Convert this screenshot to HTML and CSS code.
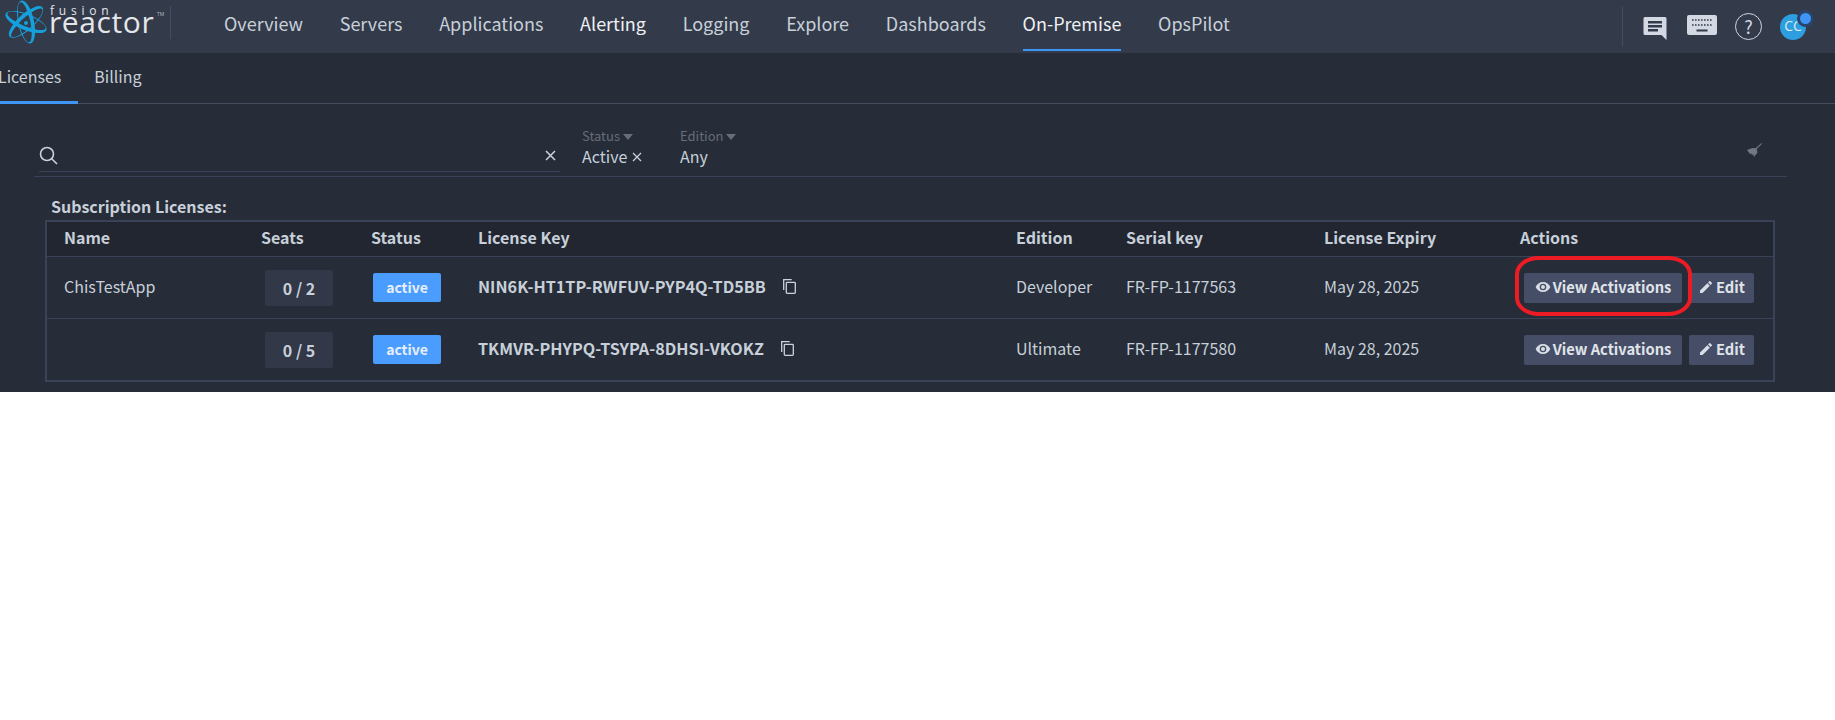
FILE: index.html
```html
<!DOCTYPE html>
<html lang="en">
<head>
  <meta charset="UTF-8">
  <meta name="viewport" content="width=device-width, initial-scale=1.0">
  <title>FusionReactor - Licenses</title>
  <link rel="stylesheet" href="styles.css">
</head>
<body>

<div class="page">
  <!-- top navigation -->
  <header class="topbar">
    <a class="logo">
      <svg width="170" height="53" viewBox="0 0 170 53">
        <defs>
          <path id="orbit" fill="#159fdb" fill-rule="evenodd" d="M-22 0a22 8 0 1 0 44 0a22 8 0 1 0-44 0zM-20.500 -1.300a20.500 5.600 0 1 0 41 0a20.500 5.600 0 1 0-41 0z"/>
        </defs>
        <use href="#orbit" transform="translate(26 22) rotate(-102)"/>
        <use href="#orbit" transform="translate(26 22) rotate(22)"/>
        <use href="#orbit" transform="translate(26 22) rotate(-42) scale(1 -1)"/>
        <circle cx="26" cy="23" r="2" fill="#159fdb"/>
        <text class="logo-small" x="50" y="15">fusion</text>
        <text class="logo-big" x="49" y="33">reactor</text>
        <text class="logo-tm" x="157" y="16">TM</text>
      </svg>
    </a>
    <span class="logo-sep"></span>
    <nav class="mainnav">
      <a>Overview</a>
      <a>Servers</a>
      <a>Applications</a>
      <a class="bright">Alerting</a>
      <a>Logging</a>
      <a>Explore</a>
      <a>Dashboards</a>
      <a class="bright current">On-Premise</a>
      <a>OpsPilot</a>
    </nav>
    <div class="topicons">
      <svg class="ic-chat" width="24" height="23" viewBox="0 0 24 23">
        <path fill="#d3d8e3" d="M2 0h20a1.500 1.500 0 0 1 1.500 1.500V23l-5-5H2a1.500 1.500 0 0 1-1.500-1.500v-15A1.500 1.500 0 0 1 2 0z"/>
        <path fill="#333a4a" d="M5 4h14v2.500H5zM5 8h14v2.500H5zM5 12h10v2.500H5z"/>
      </svg>
      <svg class="ic-keys" width="30" height="20" viewBox="0 0 30 20">
        <rect width="30" height="20" rx="2" fill="#d3d8e3"/>
        <path fill="#333a4a" stroke="#333a4a" stroke-width="1.600" stroke-dasharray="1.600 1.400" d="M5 5h20M5 10h20"/>
        <rect x="9.500" y="14.500" width="11" height="2" fill="#333a4a"/>
      </svg>
      <span class="ic-help">?</span>
      <span class="avatar">CC<i class="avatar-dot"></i></span>
    </div>
  </header>

  <!-- sub tabs -->
  <div class="tabs">
    <a class="tab active">Licenses</a>
    <a class="tab">Billing</a>
  </div>

  <!-- filters -->
  <div class="filters">
    <div class="searchbox">
      <svg width="19" height="19" viewBox="0 0 19 19" fill="none" stroke="#ccd3dd" stroke-width="1.600">
        <circle cx="8" cy="8" r="6.500"/>
        <path d="M12.700 12.700l5.300 5.300"/>
      </svg>
      <svg class="clear" width="11" height="11" viewBox="0 0 11 11" stroke="#ccd3dd" stroke-width="1.500">
        <path d="M1 1l9 9M10 1l-9 9"/>
      </svg>
    </div>
    <div class="filter status-filter">
      <span class="filter-label">Status <i class="caret"></i></span>
      <span class="filter-value">Active <svg class="x" width="10" height="10" viewBox="0 0 10 10" stroke="#ccd3dd" stroke-width="1.200"><path d="M1 1l8 8M9 1l-8 8"/></svg></span>
    </div>
    <div class="filter">
      <span class="filter-label">Edition <i class="caret"></i></span>
      <span class="filter-value">Any</span>
    </div>
    <svg class="broom" width="15" height="14" viewBox="0 0 15 14">
      <path fill="#737883" d="M14.500 0l.5.700-5.300 5.300.8 3.500L7 14 6.200 11 5 12.500 4.500 10.500 3 11 0 7l5.500-2 3 .2z"/>
    </svg>
  </div>

  <h3 class="section-title">Subscription Licenses:</h3>

  <table class="licenses">
    <colgroup>
      <col class="c-name"><col class="c-seats"><col class="c-status"><col class="c-key">
      <col class="c-edition"><col class="c-serial"><col class="c-expiry"><col class="c-actions">
    </colgroup>
    <thead>
      <tr>
        <th>Name</th>
        <th>Seats</th>
        <th>Status</th>
        <th>License Key</th>
        <th>Edition</th>
        <th>Serial key</th>
        <th>License Expiry</th>
        <th>Actions</th>
      </tr>
    </thead>
    <tbody>
      <tr class="row-a">
        <td>ChisTestApp</td>
        <td class="boxed"><span class="seats">0 / 2</span></td>
        <td class="boxed"><span class="badge">active</span></td>
        <td class="keycell"><b>NIN6K-HT1TP-RWFUV-PYP4Q-TD5BB</b>
          <svg class="copy" width="13" height="15" viewBox="0 0 13 15" fill="none" stroke="#ccd3dd" stroke-width="1.300"><path d="M.7 11V.7h8"/><rect x="3.300" y="3.300" width="9" height="11" rx=".8"/></svg>
        </td>
        <td>Developer</td>
        <td>FR-FP-1177563</td>
        <td>May 28, 2025</td>
        <td class="boxed">
          <div class="actions">
            <a class="btn btn-view"><svg width="16" height="16" viewBox="0 0 24 24"><path fill="#d8dde6" d="M12 4.500C7 4.500 2.700 7.600 1 12c1.700 4.400 6 7.500 11 7.500s9.300-3.100 11-7.500c-1.700-4.400-6-7.500-11-7.500zM12 17a5 5 0 1 1 0-10 5 5 0 0 1 0 10zm0-8a3 3 0 1 0 0 6 3 3 0 0 0 0-6z"/></svg>View Activations</a>
            <a class="btn btn-edit"><svg width="16" height="16" viewBox="0 0 24 24"><path fill="#d8dde6" d="M3 17.250V21h3.750L17.810 9.940l-3.750-3.750L3 17.250zM20.710 7.040a1 1 0 0 0 0-1.410l-2.340-2.340a1 1 0 0 0-1.410 0l-1.830 1.830 3.750 3.750 1.830-1.830z"/></svg>Edit</a>
            <span class="callout"></span>
          </div>
        </td>
      </tr>
      <tr class="row-b">
        <td></td>
        <td class="boxed"><span class="seats">0 / 5</span></td>
        <td class="boxed"><span class="badge">active</span></td>
        <td class="keycell"><b>TKMVR-PHYPQ-TSYPA-8DHSI-VKOKZ</b>
          <svg class="copy" width="13" height="15" viewBox="0 0 13 15" fill="none" stroke="#ccd3dd" stroke-width="1.300"><path d="M.7 11V.7h8"/><rect x="3.300" y="3.300" width="9" height="11" rx=".8"/></svg>
        </td>
        <td>Ultimate</td>
        <td>FR-FP-1177580</td>
        <td>May 28, 2025</td>
        <td class="boxed">
          <div class="actions">
            <a class="btn btn-view"><svg width="16" height="16" viewBox="0 0 24 24"><path fill="#d8dde6" d="M12 4.500C7 4.500 2.700 7.600 1 12c1.700 4.400 6 7.500 11 7.500s9.300-3.100 11-7.500c-1.700-4.400-6-7.500-11-7.500zM12 17a5 5 0 1 1 0-10 5 5 0 0 1 0 10zm0-8a3 3 0 1 0 0 6 3 3 0 0 0 0-6z"/></svg>View Activations</a>
            <a class="btn btn-edit"><svg width="16" height="16" viewBox="0 0 24 24"><path fill="#d8dde6" d="M3 17.250V21h3.750L17.810 9.940l-3.750-3.750L3 17.250zM20.710 7.040a1 1 0 0 0 0-1.410l-2.340-2.340a1 1 0 0 0-1.410 0l-1.830 1.830 3.750 3.750 1.830-1.830z"/></svg>Edit</a>
          </div>
        </td>
      </tr>
    </tbody>
  </table>
</div>

</body>
</html>
```

FILE: styles.css
```css
html, body {
  margin: 0;
  background-color: #fff;
  overflow: hidden;
}

body {
  font-family: "Noto Sans CJK SC", "Open Sans", sans-serif;
  font-size: 16px;
  line-height: 20px;
  color: #c7d0d9;
}

a {
  color: inherit;
  text-decoration: none;
}

.page {
  height: 392px;
  background-color: #262c38;
  overflow: hidden;
}

/* top navigation */
.topbar {
  display: flex;
  align-items: center;
  height: 53px;
  background-color: #333a4a;
}

.logo {
  display: block;
  width: 170px;
  height: 53px;
}

.logo svg {
  display: block;
}

.logo-sep {
  width: 1px;
  height: 33px;
  margin-top: -8px;
  background-color: #454c5e;
}

.logo-small {
  font-family: "Open Sans", sans-serif;
  font-size: 12px;
  letter-spacing: 4.800px;
  fill: #e4e6ea;
}

.logo-big {
  font-family: "Open Sans", sans-serif;
  font-size: 30px;
  font-weight: 400;
  letter-spacing: .6px;
  fill: #e4e6ea;
}

.logo-tm {
  font-family: "Open Sans", sans-serif;
  font-size: 5px;
  fill: #b8bcc5;
}

.mainnav {
  display: flex;
  height: 53px;
  margin-left: 53px;
  gap: 36.700px;
  font-size: 18px;
}

.mainnav a {
  display: block;
  height: 49px;
  line-height: 46px;
}

.mainnav .bright {
  color: #eef0f3;
}

.mainnav .current {
  height: 49px;
  border-bottom: 2px solid #3f95f5;
}

.topicons {
  display: flex;
  align-items: center;
  height: 40px;
  margin-left: auto;
  margin-right: 29px;
  padding-left: 20px;
  border-left: 1px solid #454c5e;
}

.ic-chat {
  margin-right: 20px;
  margin-top: 3px;
}

.ic-keys {
  margin-right: 18px;
  margin-top: -3px;
}

.ic-help {
  display: block;
  width: 25px;
  height: 25px;
  margin-right: 18px;
  border: 1px solid #d3d8e3;
  border-radius: 50%;
  font-size: 18px;
  line-height: 25px;
  text-align: center;
  color: #d3d8e3;
}

.avatar {
  position: relative;
  display: block;
  width: 26px;
  height: 26px;
  border-radius: 50%;
  background-color: #2d9ee0;
  color: #dfeaf5;
  font-family: "Open Sans", sans-serif;
  font-size: 14px;
  line-height: 23px;
  text-align: center;
}

.avatar-dot {
  position: absolute;
  top: -1px;
  right: -5px;
  width: 11px;
  height: 11px;
  border-radius: 50%;
  background-color: #3f95f5;
  box-shadow: 0 0 0 3px #2a4368;
}

/* tabs */
.tabs {
  display: flex;
  height: 50px;
  margin-left: -18px;
  border-bottom: 1px solid #454c5e;
}

.tab {
  display: block;
  height: 48px;
  padding: 0 16px;
  line-height: 47px;
}

.tab.active {
  height: 48px;
  padding-right: 17px;
  border-bottom: 3px solid #3f95f5;
}

/* filter row */
.filters {
  position: relative;
  display: flex;
  height: 73px;
  margin: 0 48px 0 34px;
  border-bottom: 1px solid #3a4257;
  box-sizing: border-box;
}

.searchbox {
  display: flex;
  align-items: center;
  justify-content: space-between;
  width: 521px;
  height: 35px;
  margin: 33px 0 0 5px;
  padding: 3px 4px 0 0;
  box-sizing: border-box;
  border-bottom: 1px solid #3a4257;
}

.filter {
  display: flex;
  flex-direction: column;
  padding-top: 24px;
  margin-left: 29px;
  min-width: 69px;
}

.status-filter {
  margin-left: 22px;
}

.filter-label {
  font-size: 13px;
  line-height: 16px;
  color: #676d79;
}

.filter-value {
  margin-top: 2px;
  line-height: 20px;
  color: #c7d0d9;
}

.x {
  margin-left: 1px;
  vertical-align: 1px;
}

.caret {
  display: inline-block;
  width: 0;
  height: 0;
  vertical-align: 1px;
  border-left: 5px solid transparent;
  border-right: 5px solid transparent;
  border-top: 6px solid #676d79;
}

.broom {
  position: absolute;
  top: 39px;
  right: 25px;
}

.section-title {
  margin: 19px 0 0 51px;
  height: 24px;
  font-size: 16px;
  line-height: 20px;
  font-weight: 700;
}

/* table */
.licenses {
  width: 1730px;
  margin-left: 45px;
  table-layout: fixed;
  border-collapse: separate;
  border-spacing: 0;
  border: 2px solid #3a4257;
}

.c-name { width: 198px; }
.c-seats { width: 110px; }
.c-status { width: 107px; }
.c-key { width: 538px; }
.c-edition { width: 110px; }
.c-serial { width: 198px; }
.c-expiry { width: 196px; }
.c-actions { width: 269px; }

.licenses th {
  height: 30px;
  padding: 0 0 4px 16px;
  background-color: #222631;
  text-align: left;
  font-weight: 700;
  border-bottom: 1px solid #3a4257;
}

.licenses td {
  padding: 0 0 4px 16px;
  white-space: nowrap;
}

.licenses th:first-child,
.licenses td:first-child {
  padding-left: 17px;
}

.licenses td.boxed {
  padding-bottom: 0;
}

.row-a td {
  height: 57px;
  border-bottom: 1px solid #3a4257;
}

.row-b td {
  height: 57px;
}

.row-a td.boxed,
.row-b td.boxed {
  height: 61px;
}

.keycell b {
  font-size: 16.200px;
  font-weight: 700;
}

.copy {
  margin-left: 14px;
  vertical-align: -1px;
}

.seats {
  display: block;
  width: 68px;
  height: 36px;
  margin-left: 4px;
  border-radius: 2px;
  background-color: #323848;
  font-weight: 700;
  line-height: 36px;
  text-align: center;
}

.badge {
  display: block;
  width: 68px;
  height: 29px;
  margin-left: 2px;
  border-radius: 2px;
  background-color: #4a9cff;
  color: #e6eefa;
  font-size: 14px;
  font-weight: 700;
  line-height: 29px;
  text-align: center;
}

.actions {
  position: relative;
  display: flex;
  margin-left: 4px;
  gap: 7px;
}

.btn {
  display: flex;
  align-items: center;
  justify-content: center;
  height: 30px;
  padding-bottom: 2px;
  box-sizing: border-box;
  border-radius: 2px;
  background-color: #454e66;
  color: #e0e4ea;
  font-size: 14.700px;
  font-weight: 700;
  gap: 2px;
}

.btn-view {
  width: 158px;
}

.btn-edit {
  width: 65px;
}

/* red annotation drawn over the first row */
.callout {
  position: absolute;
  left: -9px;
  top: -17px;
  width: 177px;
  height: 60px;
  box-sizing: border-box;
  border: 4px solid #ed1c24;
  border-radius: 24px / 18px;
}
```
